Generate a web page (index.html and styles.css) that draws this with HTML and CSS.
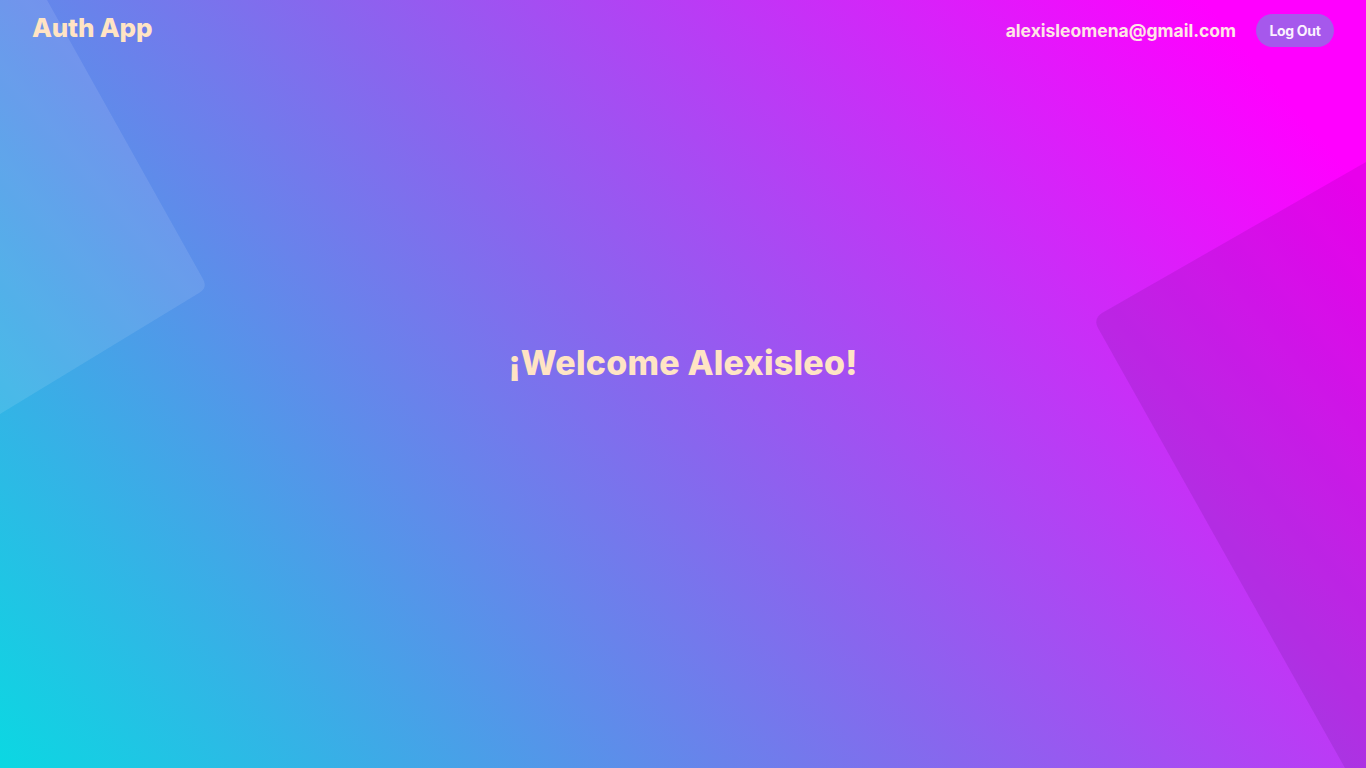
FILE: index.html
```html
<!DOCTYPE html>
<html lang="en">
<head>
<meta charset="utf-8">
<title>Auth App</title>
<link rel="stylesheet" href="styles.css">
</head>
<body>
<svg class="bg-shapes" viewBox="0 0 1366 768" preserveAspectRatio="none" aria-hidden="true">
  <path class="shape-light" d="M0,0 L47,0 L203,279 Q208,288 199,293 L0,414 Z"/>
  <path class="shape-dark" d="M1366,162 L1102,313 Q1093,319 1098,328 L1345,768 L1366,768 Z"/>
</svg>
<div class="page">
  <header class="topbar">
    <div class="brand">Auth App</div>
    <div class="user">
      <span class="email">alexisleomena@gmail.com</span>
      <button class="logout">Log Out</button>
    </div>
  </header>
  <main class="content">
    <h1 class="welcome">¡Welcome Alexisleo!</h1>
  </main>
</div>
</body>
</html>
```
FILE: styles.css
```css
html, body {
  margin: 0;
  padding: 0;
  height: 100%;
}
body {
  background: linear-gradient(50deg, #0bd8e2 0%, #8866ee 48%, #ff00ff 92%);
  font-family: Inter, "Noto Sans", sans-serif;
  overflow: hidden;
  position: relative;
}
.bg-shapes {
  position: absolute;
  inset: 0;
  width: 100%;
  height: 100%;
  z-index: 0;
}
.shape-light { fill: rgba(255, 255, 255, 0.1); }
.shape-dark { fill: rgba(30, 0, 60, 0.1); }
.page {
  position: relative;
  z-index: 1;
  height: 100vh;
  display: flex;
  flex-direction: column;
}
.topbar {
  display: flex;
  justify-content: space-between;
  align-items: center;
  padding: 12px 32px 0 32px;
  height: 36px;
}
.brand {
  color: #ffe4c4;
  font-weight: 800;
  font-size: 26px;
  letter-spacing: -0.2px;
  margin-top: -6px;
}
.user {
  display: flex;
  align-items: center;
  gap: 20px;
}
.email {
  color: #ffe6e6;
  font-weight: 700;
  font-size: 17.5px;
}
.logout {
  background: #a658ec;
  color: #fbf2ff;
  border: none;
  border-radius: 17px;
  font-family: inherit;
  font-weight: 700;
  font-size: 14px;
  width: 78px;
  height: 33px;
  padding: 0;
  letter-spacing: -0.3px;
}
.content {
  flex: 1;
  display: flex;
  align-items: center;
  justify-content: center;
  padding-bottom: 92px;
}
.welcome {
  margin: 0;
  color: #ffe4c4;
  font-weight: 800;
  font-size: 34px;
  letter-spacing: 0.2px;
}
```
